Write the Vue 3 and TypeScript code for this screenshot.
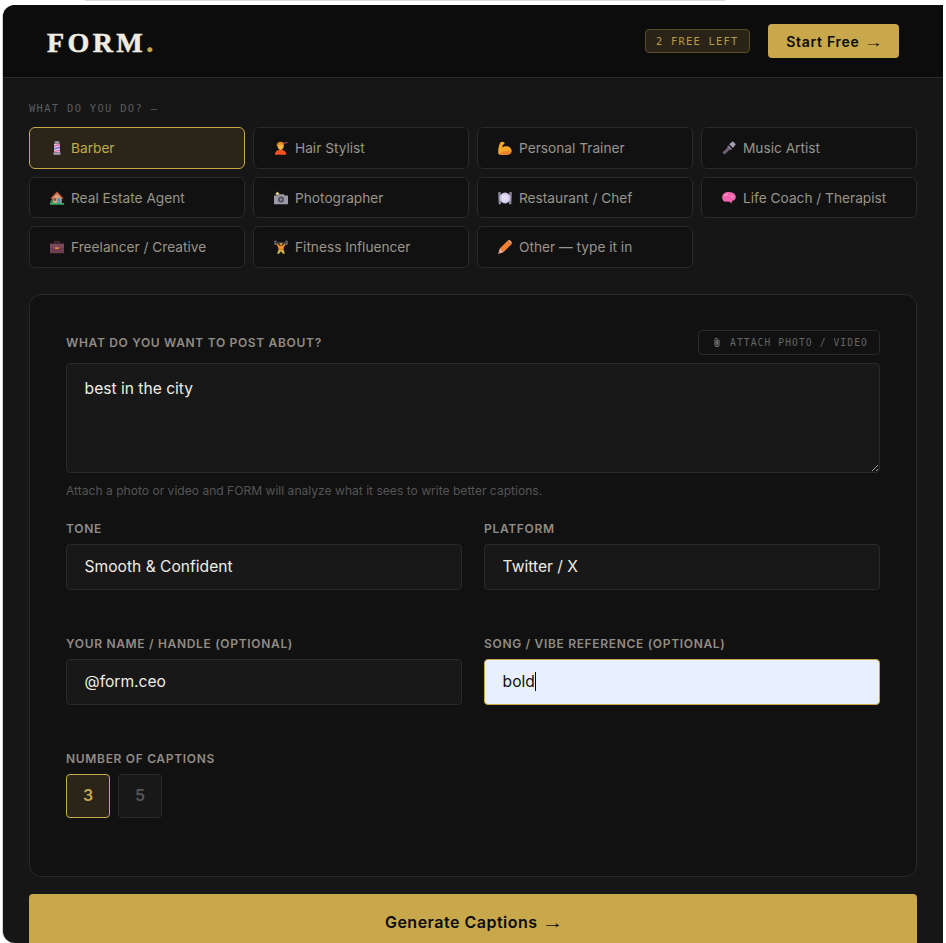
<script setup lang="ts">
import { ref } from 'vue'

interface Shape {
  d: string
  fill: string
}

interface Niche {
  label: string
  icon: Shape[]
}

const niches: Niche[] = [
  {
    label: 'Barber',
    icon: [
      { d: 'M5.4 0.3h5.2v2.6H5.4z', fill: '#a99fb5' },
      { d: 'M4.6 3h6.8v9.6H4.6z', fill: '#dcd2ea' },
      { d: 'M4.6 4.8l6.8-1.6v1.8L4.6 6.6z', fill: '#e56aa8' },
      { d: 'M4.6 8l6.8-1.6v1.8L4.6 9.8z', fill: '#7d6fd6' },
      { d: 'M4.6 11.2l6.8-1.6v1.8l-6.8 1.2z', fill: '#e56aa8' },
      { d: 'M4 12.8h8v2.9H4z', fill: '#a99fb5' },
    ],
  },
  {
    label: 'Hair Stylist',
    icon: [
      { d: 'M1 15.7c0-3.8 3-5.7 6.5-5.7s6.5 1.9 6.5 5.7z', fill: '#f4511e' },
      { d: 'M4 5.5a3.6 3.6 0 0 1 7.2 0c0 2.6-1.6 4.8-3.6 4.8S4 8.1 4 5.5z', fill: '#f2b544' },
      { d: 'M3.2 6C2.6 2.6 5.2.8 7.6.8c2 0 3.6 1.1 4 2.9-2.2.2-5 .3-6 1-.7.5-1.4 1.3-2.4 1.3z', fill: '#e08a1e' },
      { d: 'M10.5 2l5-1 .3 1.1-5 1.3z', fill: '#c2477f' },
    ],
  },
  {
    label: 'Personal Trainer',
    icon: [
      {
        d: 'M2.8 1.4C4.4.4 6.4.6 7.2 1.7c.6.9.2 1.9-.8 2.2l-1 .3c-.2 1.1-.2 2.2 0 3.1 1.6-1.4 4.2-1.8 6.2-.9 2.4 1 3.9 2.8 3.9 5 0 2.6-2.2 4.2-5.4 4.2H2.8C1.2 15.6.2 14.6.2 13.1.2 9.2.8 4.6 2.8 1.4z',
        fill: '#f9a72b',
      },
      { d: 'M5.4 12.2c2.2-.9 5.4-.7 10.3-.9-.5 2.8-2.5 4.3-5.6 4.3H2.8c-1.2 0-2.1-.6-2.4-1.6 1.8.3 3.6-1 5-1.8z', fill: '#f0842c' },
    ],
  },
  {
    label: 'Music Artist',
    icon: [
      { d: 'M7.8 5.8l2.6 2.6-7.4 7-2.4-2.4z', fill: '#6d5f78' },
      { d: 'M8.2 3.6L12.4.4l3.4 3.2-3.2 4.4z', fill: '#a79bb3' },
      { d: 'M7.2 4.8l4.2 4.2-1.6 1.2-3.8-3.8z', fill: '#8b7d96' },
    ],
  },
  {
    label: 'Real Estate Agent',
    icon: [
      { d: 'M2.6 7.5L8 1.6l5.4 5.9v6.5H2.6z', fill: '#d79e7e' },
      { d: 'M.6 8.2L8 .6l7.4 7.6-1.1 1L8 3 1.7 9.2z', fill: '#c65c38' },
      { d: 'M8.6 8.4h3.2v5.4H8.6z', fill: '#3d97c9' },
      { d: 'M4 8.4h3v2.8H4z', fill: '#8a4b36' },
      { d: 'M0 13.6h16v2.2H0z', fill: '#35ab62' },
      { d: 'M.4 13.8c0-2.2.6-3.6 1.6-3.6s1.6 1.4 1.6 3.6z', fill: '#2b8a4e' },
    ],
  },
  {
    label: 'Photographer',
    icon: [
      { d: 'M3.8.6l.9 1.5 1.6.4-1.2 1.1.2 1.6-1.5-.8-1.4.8.2-1.6-1.2-1.1 1.6-.4z', fill: '#f4d98a' },
      { d: 'M0 5h3.8l1-1.2h6.4l1 1.2H16v10H0z', fill: '#9a9aa8' },
      { d: 'M4.6 9.8a3.4 3.4 0 1 0 6.8 0 3.4 3.4 0 1 0-6.8 0z', fill: '#4c4c57' },
      { d: 'M6.4 9.8a1.6 1.6 0 1 0 3.2 0 1.6 1.6 0 1 0-3.2 0z', fill: '#8c8c9a' },
    ],
  },
  {
    label: 'Restaurant / Chef',
    icon: [
      { d: 'M.2 1.5L3 1.1l.5 14H.8z', fill: '#8f8a99' },
      { d: 'M15.8 1.5L13 1.1l-.5 14h2.7z', fill: '#8f8a99' },
      { d: 'M1.8 8a6.2 6.2 0 1 0 12.4 0A6.2 6.2 0 1 0 1.8 8z', fill: '#cfc6ea' },
      { d: 'M4 8a4 4 0 1 0 8 0 4 4 0 1 0-8 0z', fill: '#e2dcf5' },
    ],
  },
  {
    label: 'Life Coach / Therapist',
    icon: [
      {
        d: 'M.2 7C.2 3.4 3.2 1 7 1c1.2 0 2 .1 3 .5 3.3.5 5.8 2.6 5.8 5.4 0 2.8-2 4.2-4.4 4.5l-.5 2.8-2.6-2.2c-.9.4-2 .3-2.9 0C2.4 12.8.2 10.2.2 7z',
        fill: '#f264ad',
      },
      { d: 'M2.4 5.4C3.8 3.4 6 2.8 8 3.2c-.9 1-3 1.4-3.5 3-.7.2-1.4 0-2.1-.8z', fill: '#f9a3d0' },
      { d: 'M9.4 5.4c1.6-.2 3.2.4 4.2 1.6-1.2.4-2.8.2-4.2-1.6z', fill: '#f9a3d0' },
    ],
  },
  {
    label: 'Freelancer / Creative',
    icon: [
      { d: 'M4.8 1.2h6.4v3.2H9.8V2.8H6.2v1.6H4.8z', fill: '#4d2c38' },
      { d: 'M0 4.2h16v11H0z', fill: '#6e3d50' },
      { d: 'M0 4.2h16v5H0z', fill: '#7b4659' },
      { d: 'M5.8 8.2h4.4v2H5.8z', fill: '#e08a3c' },
    ],
  },
  {
    label: 'Fitness Influencer',
    icon: [
      { d: 'M.4 .8h2.4v4.6H.4zM13.2 .8h2.4v4.6h-2.4z', fill: '#7c7c84' },
      { d: 'M.4 2.4h15.2v1.2H.4z', fill: '#3d3d45' },
      { d: 'M6 3.6a2 2 0 1 0 4 0z', fill: '#f2c14e' },
      { d: 'M2.6 4.4l1.6-.4L6 6.2h4L11.8 4l1.6.4-2.4 4.4v2.4H5v-2.4z', fill: '#f0912a' },
      { d: 'M5 11h6l1.4 4.8h-2.2L8 12.8l-2.2 3H3.6z', fill: '#d8b13c' },
    ],
  },
  {
    label: 'Other — type it in',
    icon: [
      { d: 'M11 .8l4.2 4.2-9 9-4.2-4.2z', fill: '#f27f32' },
      { d: 'M11 .8c.9-.9 2.4-.9 3.2 0l1 1c.8.9.8 2.3 0 3.2z', fill: '#f4a06a' },
      { d: 'M2 9.8L6.2 14 .4 15.6z', fill: '#f2c6a4' },
      { d: 'M1.2 12.6l2.2 2.2-3 .8z', fill: '#d96a72' },
    ],
  },
]

const active = ref('Barber')
const count = ref(3)
const topic = ref('best in the city')
const tone = ref('Smooth & Confident')
const platform = ref('Twitter / X')
const handle = ref('@form.ceo')
const vibe = ref('bold')
</script>

<template>
  <div class="frame">
    <header class="topbar">
      <div class="logo">FORM<span class="logo-dot">.</span></div>
      <div class="topbar-right">
        <span class="free-badge">2 FREE LEFT</span>
        <button class="start-btn" type="button">Start Free <span class="arrow">→</span></button>
      </div>
    </header>

    <main class="content">
      <p class="section-label">WHAT DO YOU DO? —</p>
      <div class="niche-grid">
        <button
          v-for="n in niches"
          :key="n.label"
          type="button"
          class="niche"
          :class="{ selected: active === n.label }"
          @click="active = n.label"
        >
          <svg class="niche-icon" viewBox="0 0 16 16" aria-hidden="true">
            <path v-for="(s, i) in n.icon" :key="i" :d="s.d" :fill="s.fill" />
          </svg>
          <span>{{ n.label }}</span>
        </button>
      </div>

      <section class="card">
        <div class="topic-head">
          <label class="field-label">WHAT DO YOU WANT TO POST ABOUT?</label>
          <button class="attach" type="button">
            <svg class="clip" viewBox="0 0 10 14" aria-hidden="true">
              <path
                d="M7.6 3.6v6.2a2.6 2.6 0 0 1-5.2 0V3.2a1.7 1.7 0 0 1 3.4 0v6.2a.8.8 0 0 1-1.6 0V4"
                fill="none"
                stroke="#8a8a8a"
                stroke-width="1.1"
              />
            </svg>
            ATTACH PHOTO / VIDEO
          </button>
        </div>
        <textarea v-model="topic" class="field topic"></textarea>
        <p class="hint">Attach a photo or video and FORM will analyze what it sees to write better captions.</p>

        <div class="two-col">
          <div>
            <label class="field-label">TONE</label>
            <input v-model="tone" class="field" />
          </div>
          <div>
            <label class="field-label">PLATFORM</label>
            <input v-model="platform" class="field" />
          </div>
          <div>
            <label class="field-label">YOUR NAME / HANDLE (OPTIONAL)</label>
            <input v-model="handle" class="field" />
          </div>
          <div>
            <label class="field-label">SONG / VIBE REFERENCE (OPTIONAL)</label>
            <div class="field autofilled">{{ vibe }}<span class="caret"></span></div>
          </div>
        </div>

        <label class="field-label">NUMBER OF CAPTIONS</label>
        <div class="counts">
          <button
            v-for="c in [3, 5]"
            :key="c"
            type="button"
            class="count"
            :class="{ selected: count === c }"
            @click="count = c"
          >
            {{ c }}
          </button>
        </div>
      </section>

      <button class="generate" type="button">Generate Captions <span class="arrow">→</span></button>
    </main>
  </div>
  <div class="tab-sliver"></div>
</template>

<style>
html,
body {
  margin: 0;
  background: #fff;
  height: 943px;
  overflow: hidden;
}
</style>

<style scoped>
.frame {
  margin: 5px 0 0 3px;
  width: 940px;
  height: 938px;
  background: #161616;
  border-radius: 12px 0 0 12px;
  box-shadow: -1px 0 0 #d0d0d0;
  overflow: hidden;
  font-family: Inter, 'Liberation Sans', sans-serif;
}

/* sliver of the window above, cut off by the capture */
.tab-sliver {
  position: absolute;
  top: 0;
  left: 85px;
  width: 640px;
  height: 1px;
  background: #d8d8d8;
}

.topbar {
  height: 72px;
  display: flex;
  align-items: center;
  justify-content: space-between;
  padding: 0 44px;
  background: #0c0c0c;
  border-bottom: 1px solid #2a2a2a;
}

.logo {
  padding-top: 4px;
  font-family: 'Liberation Serif', serif;
  font-weight: 700;
  font-size: 28px;
  letter-spacing: 3.4px;
  -webkit-text-stroke: 0.5px #f0ece2;
  color: #f0ece2;
}

.logo-dot {
  color: #c8a84b;
  -webkit-text-stroke: 0.5px #c8a84b;
}

.topbar-right {
  display: flex;
  align-items: center;
  gap: 18px;
}

.free-badge {
  height: 24px;
  width: 105px;
  box-sizing: border-box;
  display: flex;
  align-items: center;
  font-family: 'DejaVu Sans Mono', monospace;
  font-size: 10.4px;
  letter-spacing: 1.25px;
  color: #b89b45;
  background: #2a2418;
  border: 1px solid #5a4c26;
  border-radius: 4px;
  padding: 0 10px;
}

.start-btn {
  height: 34px;
  width: 131px;
  padding: 0;
  background: #c8a84b;
  color: #0c0c0c;
  border: none;
  border-radius: 4px;
  font-family: inherit;
  font-size: 14px;
  font-weight: 600;
  letter-spacing: 0.7px;
}

.arrow {
  display: inline-block;
  margin-right: 3px;
  transform: scaleX(1.35);
  transform-origin: left center;
  font-family: 'Liberation Sans', sans-serif;
  font-weight: 400;
  letter-spacing: 0;
}

.content {
  padding: 25px 26px 0;
}

.section-label {
  margin: 0 0 13px;
  font-family: 'DejaVu Sans Mono', monospace;
  font-size: 10.4px;
  line-height: 11px;
  letter-spacing: 1.35px;
  color: #5c5c5c;
}

.niche-grid {
  display: grid;
  grid-template-columns: repeat(4, 216px);
  gap: 8px;
}

.niche {
  height: 41.5px;
  display: flex;
  align-items: center;
  gap: 7px;
  padding: 0.5px 20px 0;
  background: #111;
  border: 1px solid #2a2a2a;
  border-radius: 6px;
  color: #99948c;
  font-family: inherit;
  font-size: 13.7px;
  text-align: left;
}

.niche.selected {
  background: #2a2518;
  border-color: #c8a84b;
  color: #c8a84b;
}

.niche-icon {
  width: 14px;
  height: 14px;
  flex: none;
}

.card {
  margin-top: 26.5px;
  height: 583px;
  box-sizing: border-box;
  padding: 35px 36px;
  background: #111;
  border: 1px solid #2a2a2a;
  border-radius: 12px;
}

.topic-head {
  display: flex;
  align-items: center;
  justify-content: space-between;
  margin-bottom: 8px;
}

.field-label {
  display: block;
  margin-bottom: 8px;
  font-size: 12px;
  line-height: 15px;
  font-weight: 600;
  letter-spacing: 0.68px;
  color: #918c84;
}

.topic-head .field-label {
  margin-bottom: 0;
}

.attach {
  width: 182px;
  height: 25px;
  padding: 0 0 0 14px;
  display: flex;
  align-items: center;
  gap: 9px;
  background: #111;
  border: 1px solid #2a2a2a;
  border-radius: 4px;
  font-family: 'DejaVu Sans Mono', monospace;
  font-size: 9.6px;
  letter-spacing: 1.12px;
  color: #666;
}

.clip {
  width: 8px;
  height: 11px;
  flex: none;
}

.field {
  display: block;
  width: 100%;
  height: 46px;
  box-sizing: border-box;
  padding: 0 17.6px 2px;
  background: #181818;
  border: 1px solid #2a2a2a;
  border-radius: 4px;
  color: #f0ece2;
  font-family: inherit;
  font-size: 15.6px;
  outline: none;
}

.topic {
  height: 110px;
  padding: 15px 17.6px;
  line-height: 20px;
  resize: vertical;
}

.hint {
  margin: 11px 0 23px;
  font-size: 12.08px;
  line-height: 14px;
  color: #555;
}

.two-col {
  display: grid;
  grid-template-columns: 1fr 1fr;
  gap: 46px 22px;
  margin-bottom: 46px;
}

.autofilled {
  display: flex;
  align-items: center;
  background: #e8f0fe;
  border-color: #c8a84b;
  color: #111;
}

.caret {
  width: 1px;
  height: 19px;
  background: #000;
}

.counts {
  display: flex;
  gap: 8px;
}

.count {
  width: 44px;
  height: 44px;
  padding: 0 0 2px;
  background: #181818;
  border: 1px solid #2a2a2a;
  border-radius: 4px;
  color: #555;
  font-family: inherit;
  font-size: 16px;
  font-weight: 600;
}

.count.selected {
  background: #2a2518;
  border-color: #c8a84b;
  color: #c8a84b;
}

.generate {
  display: block;
  width: 888px;
  height: 58px;
  margin-top: 17px;
  padding: 0 0 2px;
  background: #c8a84b;
  border: none;
  border-radius: 4px;
  color: #0c0c0c;
  font-family: inherit;
  font-size: 16px;
  font-weight: 600;
  letter-spacing: 0.5px;
}
</style>
